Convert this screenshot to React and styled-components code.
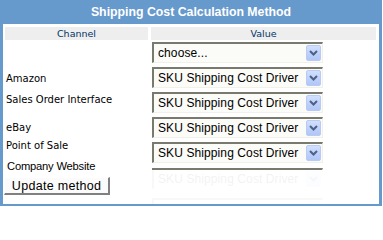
import React from "react";
import styled, { createGlobalStyle } from "styled-components";

const Global = createGlobalStyle`
  html, body { margin: 0; padding: 0; background: #ffffff; }
  body { font-family: "DejaVu Sans", Verdana, sans-serif; }
`;

const Frame = styled.div`
  position: relative;
  box-sizing: border-box;
  width: 382px;
  height: 206px;
  border-left: 3px solid #6699cc;
  border-right: 3px solid #6699cc;
  display: flex;
  flex-direction: column;
  &::after {
    content: "";
    position: absolute;
    left: -3px;
    right: -3px;
    bottom: 0;
    height: 2px;
    background: #6699cc;
    z-index: 3;
  }
`;

const TitleBar = styled.div`
  flex: none;
  margin: 0 -3px;
  height: 24px;
  background: #6699cc;
  color: #ffffff;
  font-family: "Liberation Sans", Arial, sans-serif;
  font-weight: bold;
  font-size: 12.3px;
  display: flex;
  align-items: center;
  justify-content: center;
`;

const Body = styled.div`
  flex: none;
  padding: 3px 0 0 2px;
  display: grid;
  grid-template-columns: 143px 225px;
  column-gap: 3px;
  align-items: start;
`;

const HeadCell = styled.div`
  height: 13px;
  background: #eeeeee;
  color: #003366;
  font-family: "DejaVu Sans", Verdana, sans-serif;
  font-size: 9.5px;
  display: flex;
  align-items: center;
  justify-content: center;
`;

const LabelColumn = styled.div`
  display: flex;
  flex-direction: column;
  align-items: flex-start;
  padding-top: 2px;
`;

const Label = styled.div`
  margin-top: ${(p) => p.$offset}px;
  margin-left: ${(p) => (p.$alt ? 2 : 1)}px;
  font-family: ${(p) =>
    p.$alt ? `"Liberation Sans", Arial, sans-serif` : `"DejaVu Sans", Verdana, sans-serif`};
  font-size: ${(p) => (p.$alt ? 11.2 : 10)}px;
  line-height: 12px;
  letter-spacing: ${(p) => (p.$alt ? "-0.2px" : "0")};
  color: #000000;
  white-space: nowrap;
`;

const UpdateButton = styled.button`
  margin-top: 5px;
  margin-left: -1px;
  box-sizing: border-box;
  width: 106px;
  height: 18px;
  padding: 0;
  background: #fbfbfb;
  border-top: 1px solid #ffffff;
  border-left: 1px solid #ffffff;
  border-right: 2px solid #808080;
  border-bottom: 2px solid #808080;
  font-family: "Liberation Sans", Arial, sans-serif;
  font-size: 12.5px;
  letter-spacing: 0.3px;
  color: #000000;
`;

const SelectColumn = styled.div`
  position: relative;
  display: flex;
  flex-direction: column;
  gap: 4px;
  padding: 2px 0 0 1px;
`;

const Combo = styled.div`
  flex: none;
  box-sizing: border-box;
  width: 171px;
  height: 21px;
  border-top: 2px solid #7a796e;
  border-left: 2px solid #7a796e;
  border-right: 1px solid #f1f0ea;
  border-bottom: 1px solid #f1f0ea;
  background: #fbfbf7;
  display: flex;
  align-items: center;
  padding-left: 4px;
  font-family: "Liberation Sans", Arial, sans-serif;
  font-size: 12px;
  letter-spacing: 0.1px;
  color: #000000;
  margin-top: ${(p) => p.$shift || 0}px;
`;

const ComboText = styled.span`
  flex: 1;
  min-width: 0;
  white-space: nowrap;
  overflow: hidden;
`;

const DropButton = styled.div`
  flex: none;
  box-sizing: border-box;
  width: 15px;
  height: 16px;
  margin-right: 1px;
  border: 1px solid #b8cbf4;
  border-radius: 2px;
  background: linear-gradient(180deg, #d2e0fd 0%, #bccffb 60%, #b2c7f6 100%);
  display: flex;
  align-items: center;
  justify-content: center;
`;

const Wash = styled.div`
  position: absolute;
  left: 1px;
  width: 174px;
  top: 130px;
  height: 34px;
  background: rgba(255, 255, 255, 0.95);
  z-index: 2;
`;

const Chevron = () => (
  <svg width="9" height="6" viewBox="0 0 9 6">
    <path d="M1 1 L4.5 4.5 L8 1" fill="none" stroke="#4d6185" strokeWidth="2" />
  </svg>
);

const Select = ({ value, shift }) => (
  <Combo $shift={shift}>
    <ComboText>{value}</ComboText>
    <DropButton>
      <Chevron />
    </DropButton>
  </Combo>
);

const labels = [
  { text: "Amazon", offset: 31 },
  { text: "Sales Order Interface", offset: 9 },
  { text: "eBay", offset: 16 },
  { text: "Point of Sale", offset: 6 },
  { text: "Company Website", offset: 8, alt: true },
];

const driver = "SKU Shipping Cost Driver";

export default function App() {
  return (
    <>
      <Global />
      <Frame>
        <TitleBar>Shipping Cost Calculation Method</TitleBar>
        <Body>
          <HeadCell>Channel</HeadCell>
          <HeadCell>Value</HeadCell>
          <LabelColumn>
            {labels.map((l) => (
              <Label key={l.text} $offset={l.offset} $alt={l.alt}>
                {l.text}
              </Label>
            ))}
            <UpdateButton>Update method</UpdateButton>
          </LabelColumn>
          <SelectColumn>
            <Select value="choose..." />
            <Select value={driver} />
            <Select value={driver} />
            <Select value={driver} />
            <Select value={driver} />
            <Select value={driver} shift={1} />
            <Select value={driver} shift={5} />
            <Wash />
          </SelectColumn>
        </Body>
      </Frame>
    </>
  );
}
